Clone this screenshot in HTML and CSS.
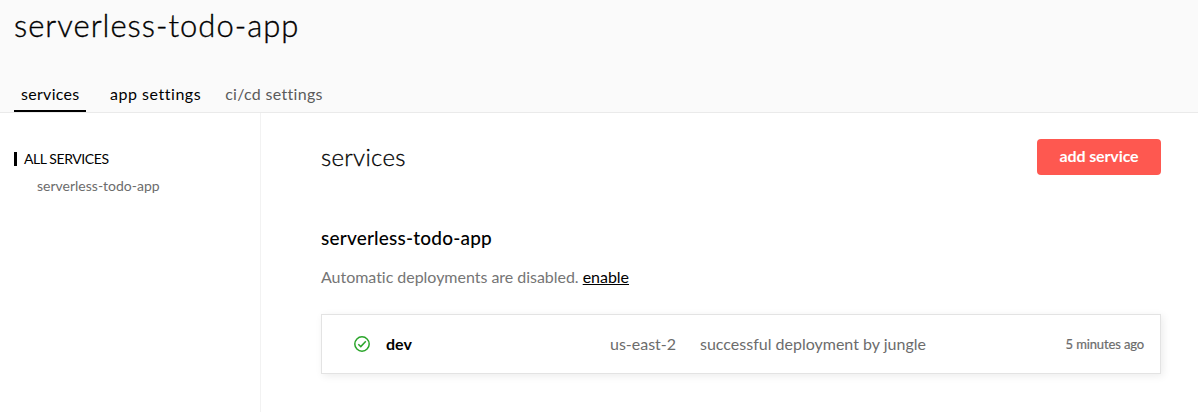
FILE: index.html
```html
<!DOCTYPE html>
<html lang="en">
<head>
<meta charset="utf-8">
<title>serverless-todo-app</title>
<link rel="stylesheet" href="styles.css">
</head>
<body>
<header class="header">
  <h1 class="title">serverless-todo-app</h1>
  <nav class="tabs">
    <a class="tab tab-active">services</a>
    <a class="tab tab-app">app settings</a>
    <a class="tab tab-muted">ci/cd settings</a>
  </nav>
</header>
<div class="layout">
  <aside class="sidebar">
    <div class="side-heading"><span>ALL SERVICES</span></div>
    <a class="side-link">serverless-todo-app</a>
  </aside>
  <main class="main">
    <div class="main-top">
      <h2 class="main-title">services</h2>
      <button class="add-button">add service</button>
    </div>
    <h3 class="service-name">serverless-todo-app</h3>
    <p class="notice"><span class="notice-text">Automatic deployments are disabled.</span> <a class="enable">enable</a></p>
    <div class="card">
      <svg class="status" viewBox="0 0 16 16" fill="none" stroke="#2aa52a" stroke-width="1.5"><circle cx="8" cy="8" r="7.2"/><path d="M4.3 8.2 6.8 10.6 11.8 5.2"/></svg>
      <span class="stage">dev</span>
      <span class="region">us-east-2</span>
      <span class="activity">successful deployment by jungle</span>
      <span class="time">5 minutes ago</span>
    </div>
  </main>
</div>
</body>
</html>
```
FILE: styles.css
```css
* { box-sizing: border-box; }
body {
  margin: 0;
  height: 412px;
  overflow: hidden;
  background: #fff;
  color: #000;
  font-family: Lato, "Open Sans", sans-serif;
  font-variant-ligatures: none;
  white-space: nowrap;
}
h1, h2, h3, p { margin: 0; }
.header {
  height: 113px;
  padding: 5px 14px 0;
  background: #fafafa;
  border-bottom: 1px solid #eaeaea;
}
.title { font-size: 31px; line-height: 40px; font-weight: 300; letter-spacing: 1px; -webkit-text-stroke: 0.35px #000; }
.tabs { display: flex; gap: 24px; margin-top: 35px; }
.tab { height: 32px; font-size: 16px; line-height: 27px; letter-spacing: 0.3px; }
.tab-active { width: 72px; padding-left: 7px; border-bottom: 2px solid #000; }
.tab-app { letter-spacing: 0.53px; }
.tab-muted { color: #5b5b5b; }
.layout { display: flex; height: 299px; }
.sidebar { width: 261px; padding: 39px 0 0 14px; border-right: 1px solid #f2f2f2; }
.side-heading { display: flex; height: 14px; padding-left: 7px; border-left: 3px solid #000; font-size: 14px; line-height: 14px; letter-spacing: -0.42px; }
.side-link { display: block; margin-top: 10px; padding-left: 23px; color: #6c6c6c; font-size: 14px; line-height: 20px; }
.main { width: 900px; padding: 26px 0 0 60px; }
.main-top { display: flex; justify-content: space-between; height: 36px; }
.main-title { font-size: 24px; line-height: 36px; font-weight: 300; letter-spacing: 0.3px; -webkit-text-stroke: 0.3px #000; }
.add-button { width: 124px; height: 36px; padding: 0; border: 0; border-radius: 4px; background: #fe5850; color: #fff; font: 700 16px/34px Lato, sans-serif; letter-spacing: -0.12px; padding-bottom: 2px; }
.service-name { margin-top: 49px; font-size: 19px; line-height: 28px; font-weight: 500; letter-spacing: 0.2px; }
.notice { margin-top: 13px; font-size: 16px; line-height: 24px; color: #757575; letter-spacing: -0.03px; }
.enable { color: #000; text-decoration: underline; }
.card { display: flex; align-items: center; height: 60px; margin-top: 25px; padding: 0 16px 0 32px; border: 1px solid #e3e3e3; box-shadow: 2px 2px 8px rgba(0, 0, 0, 0.08); color: #6c6c6c; font-size: 16px; }
.status { width: 16px; height: 16px; margin-right: 16px; }
.stage, .region, .activity { padding-bottom: 2px; }
.stage { width: 224px; color: #000; font-weight: 700; }
.region { width: 90px; }
.time { margin-left: auto; font-size: 13px; letter-spacing: -0.13px; -webkit-text-stroke: 0.2px #6c6c6c; }
```
